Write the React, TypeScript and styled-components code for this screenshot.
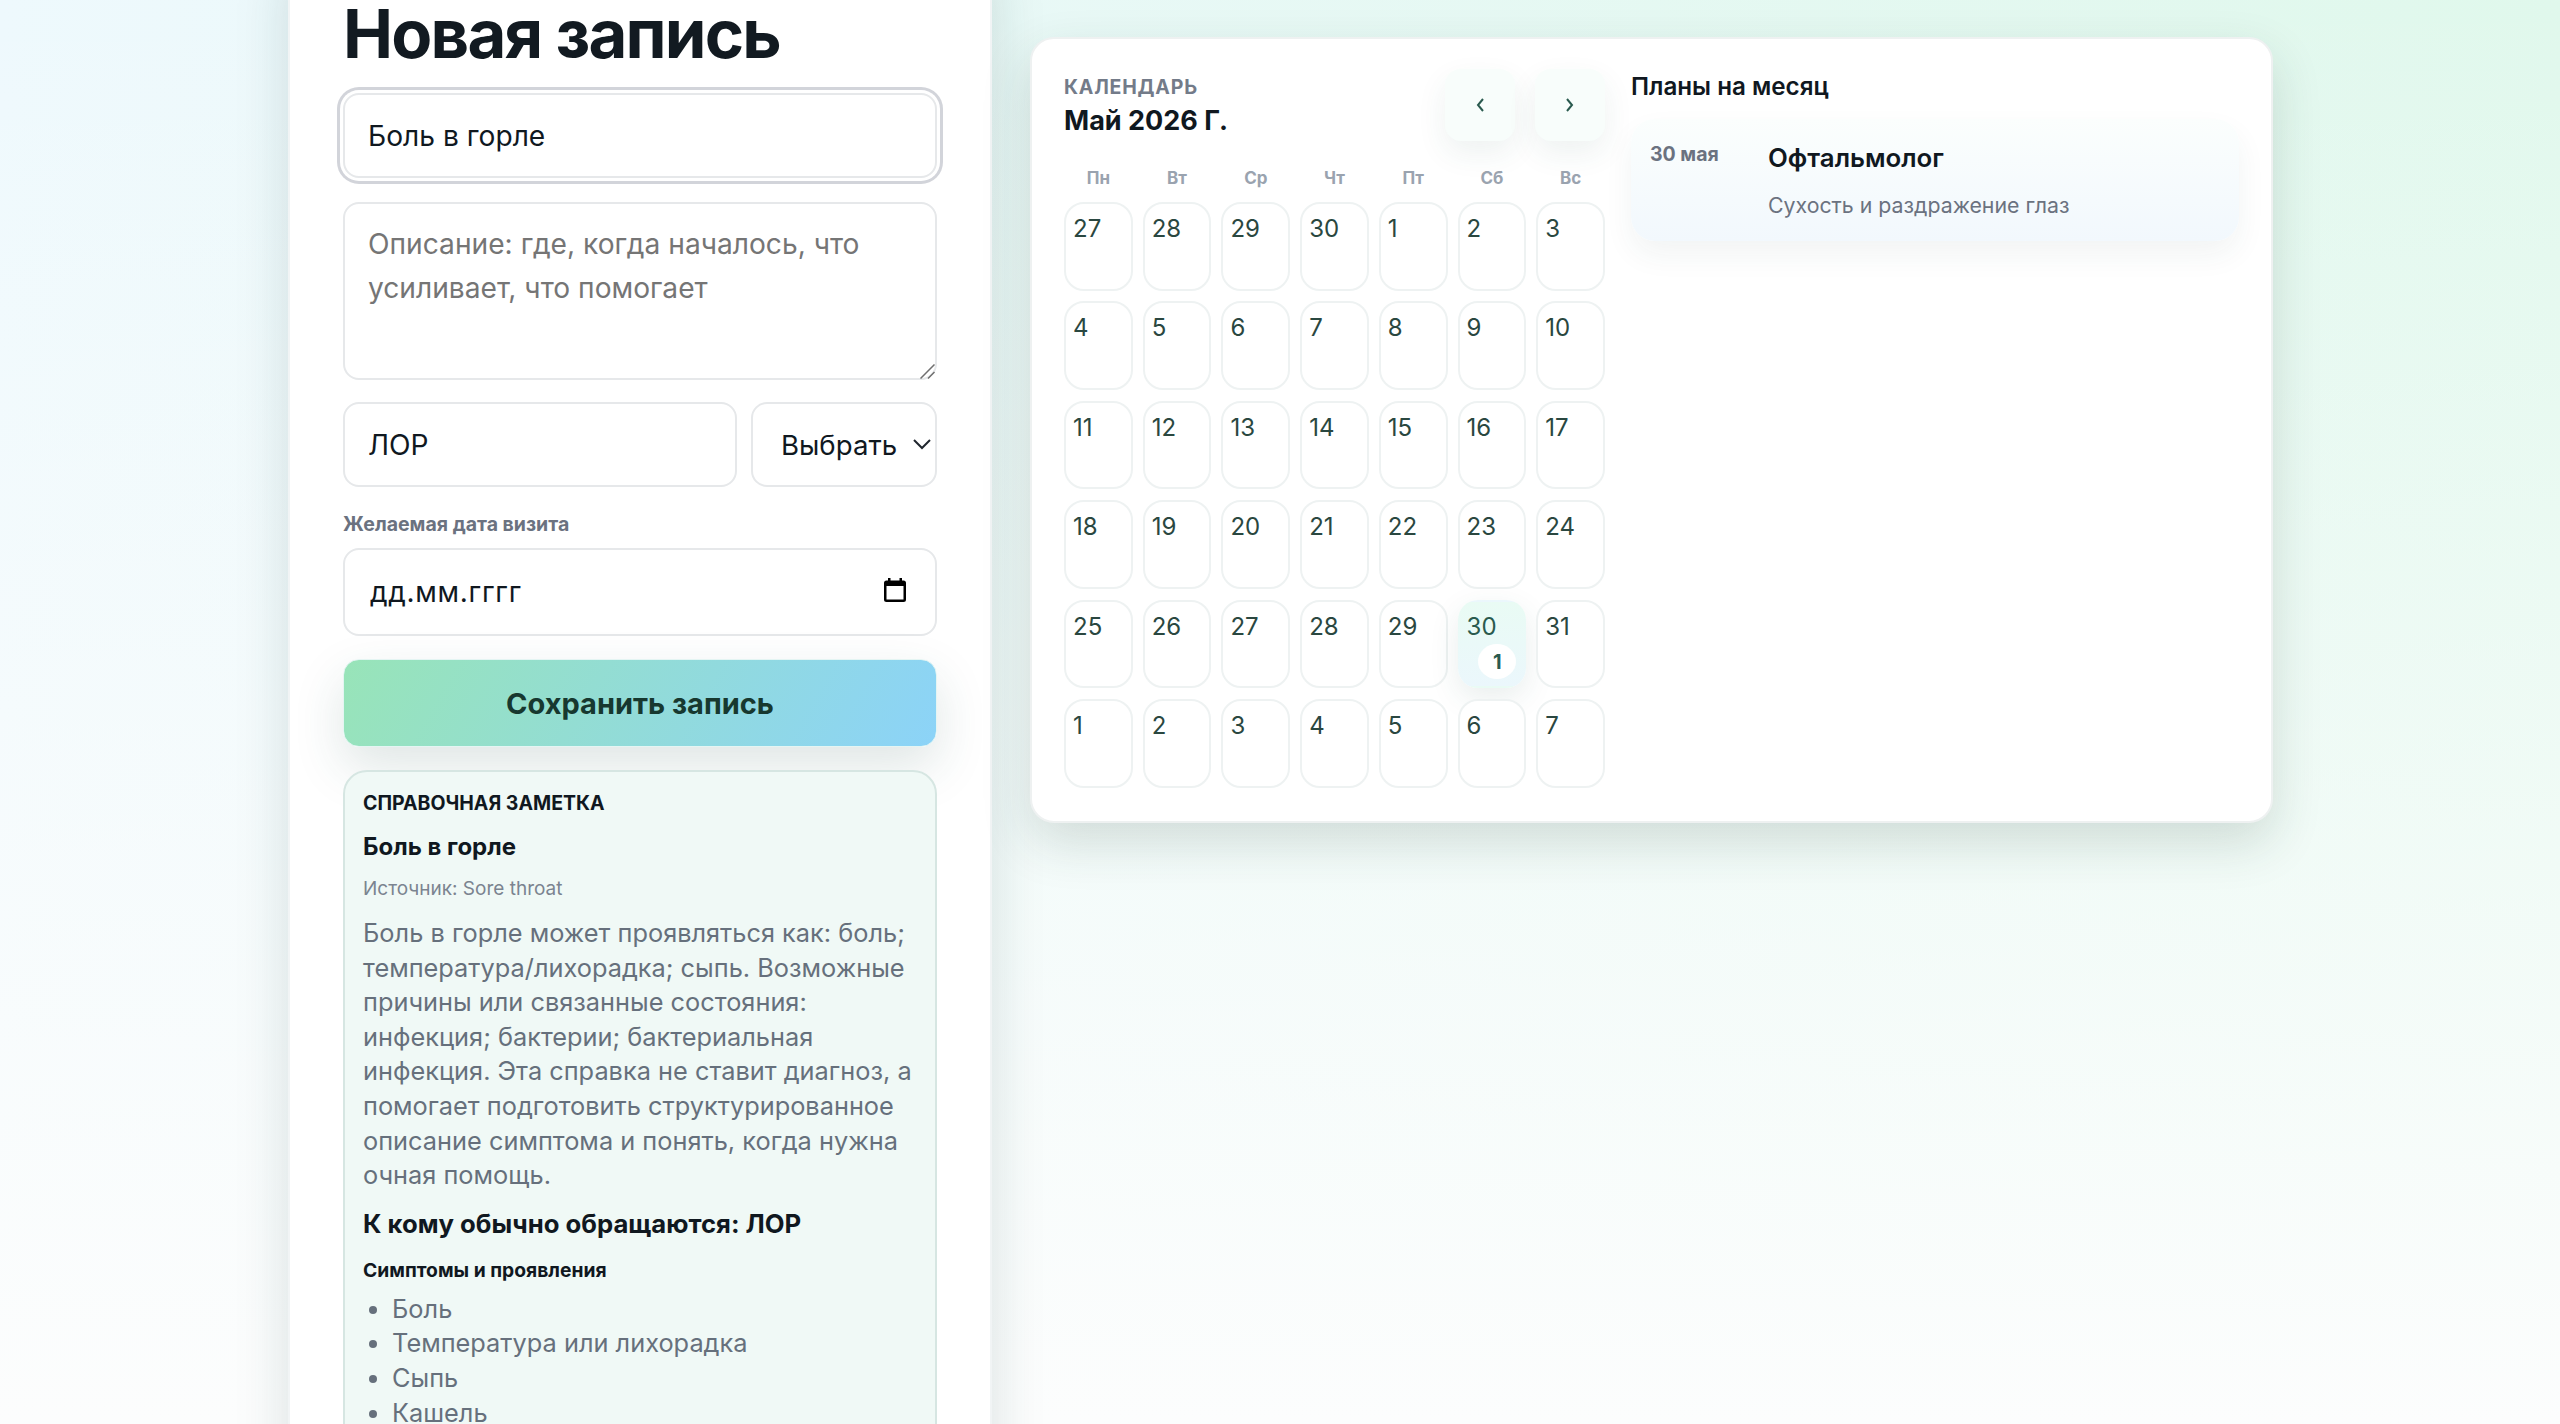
import styled, { createGlobalStyle } from 'styled-components';

const GlobalStyle = createGlobalStyle`
  html, body {
    margin: 0;
    height: 1424px;
    overflow: hidden;
  }
  body {
    font-family: Inter, "Noto Sans", sans-serif;
    color: #10181f;
    background:
      linear-gradient(180deg, rgba(252, 254, 253, 0) 0%, #fcfdfd 100%),
      linear-gradient(90deg, #eef9fd 0%, #e0f8ec 100%);
  }
  * { box-sizing: border-box; }
`;

const Layout = styled.div`
  display: flex;
  align-items: flex-start;
  gap: 38px;
  height: 1424px;
  padding-left: 288px;
  overflow: hidden;
`;

const FormPanel = styled.section`
  flex: 0 0 704px;
  display: flex;
  flex-direction: column;
  margin-top: -48px;
  padding: 37px 53px 0;
  background: #ffffff;
  border: 2px solid #f1f4f5;
  border-top: 0;
  box-shadow: 0 16px 50px rgba(20, 60, 60, 0.15);
`;

const Title = styled.h1`
  margin: 0 0 14px;
  font-size: 67px;
  line-height: 90px;
  font-weight: 700;
  letter-spacing: -1.8px;
  color: #121a21;
`;

const Field = styled.input<{ $focused?: boolean }>`
  display: block;
  width: 100%;
  min-width: 0;
  height: 85px;
  padding: 0 23px;
  font-family: inherit;
  font-size: 28.16px;
  color: #10181f;
  background: #ffffff;
  border: 2px solid #e6e8ea;
  border-radius: 16px;
  outline: none;
  box-shadow: ${p => (p.$focused ? '0 0 0 3px #ffffff, 0 0 0 6px #d2d4da' : 'none')};
`;

const DescriptionWrap = styled.div`
  position: relative;
  margin-top: 24px;
`;

const Description = styled.textarea`
  display: block;
  width: 100%;
  height: 178px;
  padding: 18px 23px;
  font-family: inherit;
  font-size: 28.16px;
  line-height: 44px;
  background: #ffffff;
  border: 2px solid #e6e8ea;
  border-radius: 16px;
  outline: none;
  resize: none;
  &::placeholder { color: #757575; }
`;

const ResizeGrip = styled.svg`
  position: absolute;
  right: 2px;
  bottom: 1px;
`;

const DoctorRow = styled.div`
  display: flex;
  gap: 14px;
  margin-top: 22px;
`;

const DoctorSelect = styled.select`
  flex: 0 0 186px;
  height: 85px;
  padding: 0 0 0 28px;
  appearance: none;
  font-family: inherit;
  font-size: 27.6px;
  color: #10181f;
  background: #ffffff url("data:image/svg+xml,%3Csvg xmlns='http://www.w3.org/2000/svg' width='18' height='11' fill='none' stroke='%2320262e' stroke-width='2'%3E%3Cpath d='M1 1l8 8 8-8'/%3E%3C/svg%3E") no-repeat right 4px center;
  border: 2px solid #e6e8ea;
  border-radius: 16px;
  outline: none;
`;

const FieldLabel = styled.label`
  display: block;
  margin: 25px 0 12px;
  font-size: 19.5px;
  line-height: 24px;
  font-weight: 700;
  color: #6b7280;
`;

const DateBox = styled.div`
  display: flex;
  align-items: center;
  justify-content: space-between;
  height: 88px;
  padding: 0 29px 0 25px;
  font-size: 28px;
  letter-spacing: 0.7px;
  border: 2px solid #e6e8ea;
  border-radius: 16px;
`;

const DateIcon = styled.svg`
  margin-bottom: 4px;
`;

const SaveButton = styled.button`
  display: block;
  width: 100%;
  height: 88px;
  margin-top: 23px;
  font-family: inherit;
  font-size: 29px;
  font-weight: 700;
  color: #17382f;
  background: linear-gradient(120deg, #98e4b8, #8cd3f8);
  border: 1px solid #e4f5f3;
  border-radius: 16px;
  box-shadow: 0 20px 50px rgba(40, 90, 80, 0.15);
`;

const NoteBox = styled.div`
  margin-top: 23px;
  padding: 19px 18px 0;
  height: 800px;
  background: #f0f9f6;
  border: 2px solid #d6e6e2;
  border-radius: 24px;
`;

const NoteKicker = styled.div`
  font-size: 19.5px;
  line-height: 24px;
  font-weight: 700;
  color: #10181f;
`;

const NoteHeading = styled.div`
  margin-top: 17px;
  font-size: 24px;
  line-height: 30px;
  font-weight: 700;
`;

const NoteSource = styled.div`
  margin-top: 15px;
  font-size: 19px;
  line-height: 24px;
  color: #7b8490;
`;

const NoteText = styled.p`
  margin: 15px 0 0;
  font-size: 25.35px;
  line-height: 34.6px;
  color: #66707c;
`;

const NoteDoctor = styled.div`
  margin-top: 14px;
  font-size: 25.7px;
  line-height: 34px;
  font-weight: 700;
`;

const NoteSubheading = styled.div`
  margin-top: 16px;
  font-size: 19.3px;
  line-height: 26px;
  font-weight: 700;
`;

const SymptomList = styled.ul`
  margin: 9px 0 0;
  padding: 0 0 0 29px;
  font-size: 25.35px;
  line-height: 34.6px;
  color: #66707c;
`;

const CalendarCard = styled.section`
  flex: 0 0 1243px;
  display: flex;
  gap: 26px;
  margin-top: 37px;
  padding: 31px 32px 33px;
  background: #ffffff;
  border: 2px solid #eef1f1;
  border-radius: 24px;
  box-shadow: 0 20px 50px rgba(30, 60, 50, 0.16);
`;

const CalendarColumn = styled.div`
  flex: 0 0 541px;
`;

const CalendarHead = styled.div`
  display: flex;
  align-items: flex-start;
  justify-content: space-between;
  height: 97px;
`;

const Kicker = styled.div`
  margin-top: 5px;
  font-size: 19.5px;
  line-height: 24px;
  font-weight: 700;
  letter-spacing: 0.8px;
  color: #737b89;
`;

const MonthTitle = styled.div`
  margin-top: 5px;
  font-size: 27px;
  line-height: 34px;
  font-weight: 700;
`;

const NavGroup = styled.div`
  display: flex;
  gap: 20px;
  margin-top: -1px;
`;

const NavButton = styled.button`
  display: flex;
  align-items: center;
  justify-content: center;
  width: 70px;
  height: 72px;
  padding: 0;
  color: #2a5a4e;
  background: #f8fdfb;
  border: 0;
  border-radius: 16px;
  box-shadow: 0 12px 30px rgba(40, 90, 80, 0.08);
`;

const WeekRow = styled.div`
  display: grid;
  grid-template-columns: repeat(7, 1fr);
  gap: 10px;
`;

const WeekDay = styled.div`
  text-align: center;
  font-size: 17px;
  line-height: 22px;
  font-weight: 700;
  color: #9aa3af;
`;

const DayGrid = styled.div`
  display: grid;
  grid-template-columns: repeat(7, 1fr);
  grid-auto-rows: 88.6px;
  gap: 10.8px 10px;
  margin-top: 13px;
`;

const DayCell = styled.div<{ $active?: boolean }>`
  position: relative;
  padding: 10px 7px;
  font-size: 24px;
  line-height: 30px;
  color: ${p => (p.$active ? '#2a5a4e' : '#2a4740')};
  background: ${p => (p.$active ? 'linear-gradient(180deg, #e9fbf4, #ebf7fc)' : '#ffffff')};
  border: 2px solid ${p => (p.$active ? 'transparent' : '#eef2f2')};
  border-radius: 20px;
  box-shadow: ${p => (p.$active ? '0 10px 30px rgba(40, 90, 80, 0.1)' : 'none')};
`;

const DayBadge = styled.span`
  position: absolute;
  right: 8px;
  bottom: 7px;
  display: flex;
  align-items: center;
  justify-content: center;
  width: 38px;
  height: 35px;
  font-size: 20px;
  font-weight: 700;
  color: #2a5a4e;
  background: #ffffff;
  border-radius: 50%;
`;

const PlansColumn = styled.div`
  flex: 1;
`;

const PlansTitle = styled.h2`
  margin: 0;
  font-size: 24.2px;
  line-height: 34px;
  font-weight: 600;
`;

const PlanCard = styled.div`
  display: flex;
  height: 122px;
  margin-top: 15px;
  padding: 22px 19px;
  background: linear-gradient(180deg, #fbfefd, #f2f8fd);
  border-radius: 24px;
  box-shadow: 0 14px 30px rgba(40, 70, 70, 0.06);
`;

const PlanDate = styled.div`
  flex: 0 0 118px;
  font-size: 19.5px;
  line-height: 26px;
  font-weight: 700;
  color: #6b7280;
`;

const PlanName = styled.div`
  font-size: 25.8px;
  line-height: 34px;
  font-weight: 600;
`;

const PlanNote = styled.div`
  margin-top: 17px;
  font-size: 21.3px;
  line-height: 26px;
  color: #6b7280;
`;

const weekDays = ['Пн', 'Вт', 'Ср', 'Чт', 'Пт', 'Сб', 'Вс'];
const days = [
  27, 28, 29, 30, 1, 2, 3,
  4, 5, 6, 7, 8, 9, 10,
  11, 12, 13, 14, 15, 16, 17,
  18, 19, 20, 21, 22, 23, 24,
  25, 26, 27, 28, 29, 30, 31,
  1, 2, 3, 4, 5, 6, 7,
];
const symptoms = ['Боль', 'Температура или лихорадка', 'Сыпь', 'Кашель', 'Насморк'];

const App = () => {
  return (
    <>
      <GlobalStyle />
      <Layout>
        <FormPanel>
          <Title>Новая запись</Title>
          <Field $focused defaultValue="Боль в горле" />
          <DescriptionWrap>
            <Description placeholder="Описание: где, когда началось, что усиливает, что помогает" />
            <ResizeGrip width="15" height="15" viewBox="0 0 15 15" stroke="#6f6f6f" strokeWidth="1.5">
              <path d="M0.5 14.5 L14.5 0.5 M8 14.5 L14.5 8" />
            </ResizeGrip>
          </DescriptionWrap>
          <DoctorRow>
            <Field defaultValue="ЛОР" />
            <DoctorSelect>
              <option>Выбрать</option>
            </DoctorSelect>
          </DoctorRow>
          <FieldLabel>Желаемая дата визита</FieldLabel>
          <DateBox>
            дд.мм.гггг
            <DateIcon width="22" height="24" viewBox="0 0 22 24" fill="#000">
              <path d="M4 0h2.5v2.5h9V0H18v2.5h1.5A2.5 2.5 0 0 1 22 5v16.5a2.5 2.5 0 0 1-2.5 2.5h-17A2.5 2.5 0 0 1 0 21.5V5a2.5 2.5 0 0 1 2.5-2.5H4V0zM2.5 8v13.5h17V8h-17z" />
            </DateIcon>
          </DateBox>
          <SaveButton>Сохранить запись</SaveButton>
          <NoteBox>
            <NoteKicker>СПРАВОЧНАЯ ЗАМЕТКА</NoteKicker>
            <NoteHeading>Боль в горле</NoteHeading>
            <NoteSource>Источник: Sore throat</NoteSource>
            <NoteText>
              Боль в горле может проявляться как: боль; температура/лихорадка; сыпь. Возможные
              причины или связанные состояния: инфекция; бактерии; бактериальная инфекция. Эта
              справка не ставит диагноз, а помогает подготовить структурированное описание симптома
              и понять, когда нужна очная помощь.
            </NoteText>
            <NoteDoctor>К кому обычно обращаются: ЛОР</NoteDoctor>
            <NoteSubheading>Симптомы и проявления</NoteSubheading>
            <SymptomList>
              {symptoms.map(s => <li key={s}>{s}</li>)}
            </SymptomList>
          </NoteBox>
        </FormPanel>
        <CalendarCard>
          <CalendarColumn>
            <CalendarHead>
              <div>
                <Kicker>КАЛЕНДАРЬ</Kicker>
                <MonthTitle>Май 2026 Г.</MonthTitle>
              </div>
              <NavGroup>
                <NavButton>
                  <svg width="10" height="16" viewBox="0 0 10 16" fill="none" stroke="currentColor" strokeWidth="2">
                    <path d="M8 2 L3 8 L8 14" />
                  </svg>
                </NavButton>
                <NavButton>
                  <svg width="10" height="16" viewBox="0 0 10 16" fill="none" stroke="currentColor" strokeWidth="2">
                    <path d="M2 2 L7 8 L2 14" />
                  </svg>
                </NavButton>
              </NavGroup>
            </CalendarHead>
            <WeekRow>
              {weekDays.map(d => <WeekDay key={d}>{d}</WeekDay>)}
            </WeekRow>
            <DayGrid>
              {days.map((d, i) => (
                <DayCell key={i} $active={i === 33}>
                  {d}
                  {i === 33 && <DayBadge>1</DayBadge>}
                </DayCell>
              ))}
            </DayGrid>
          </CalendarColumn>
          <PlansColumn>
            <PlansTitle>Планы на месяц</PlansTitle>
            <PlanCard>
              <PlanDate>30 мая</PlanDate>
              <div>
                <PlanName>Офтальмолог</PlanName>
                <PlanNote>Сухость и раздражение глаз</PlanNote>
              </div>
            </PlanCard>
          </PlansColumn>
        </CalendarCard>
      </Layout>
    </>
  );
};

export default App;
